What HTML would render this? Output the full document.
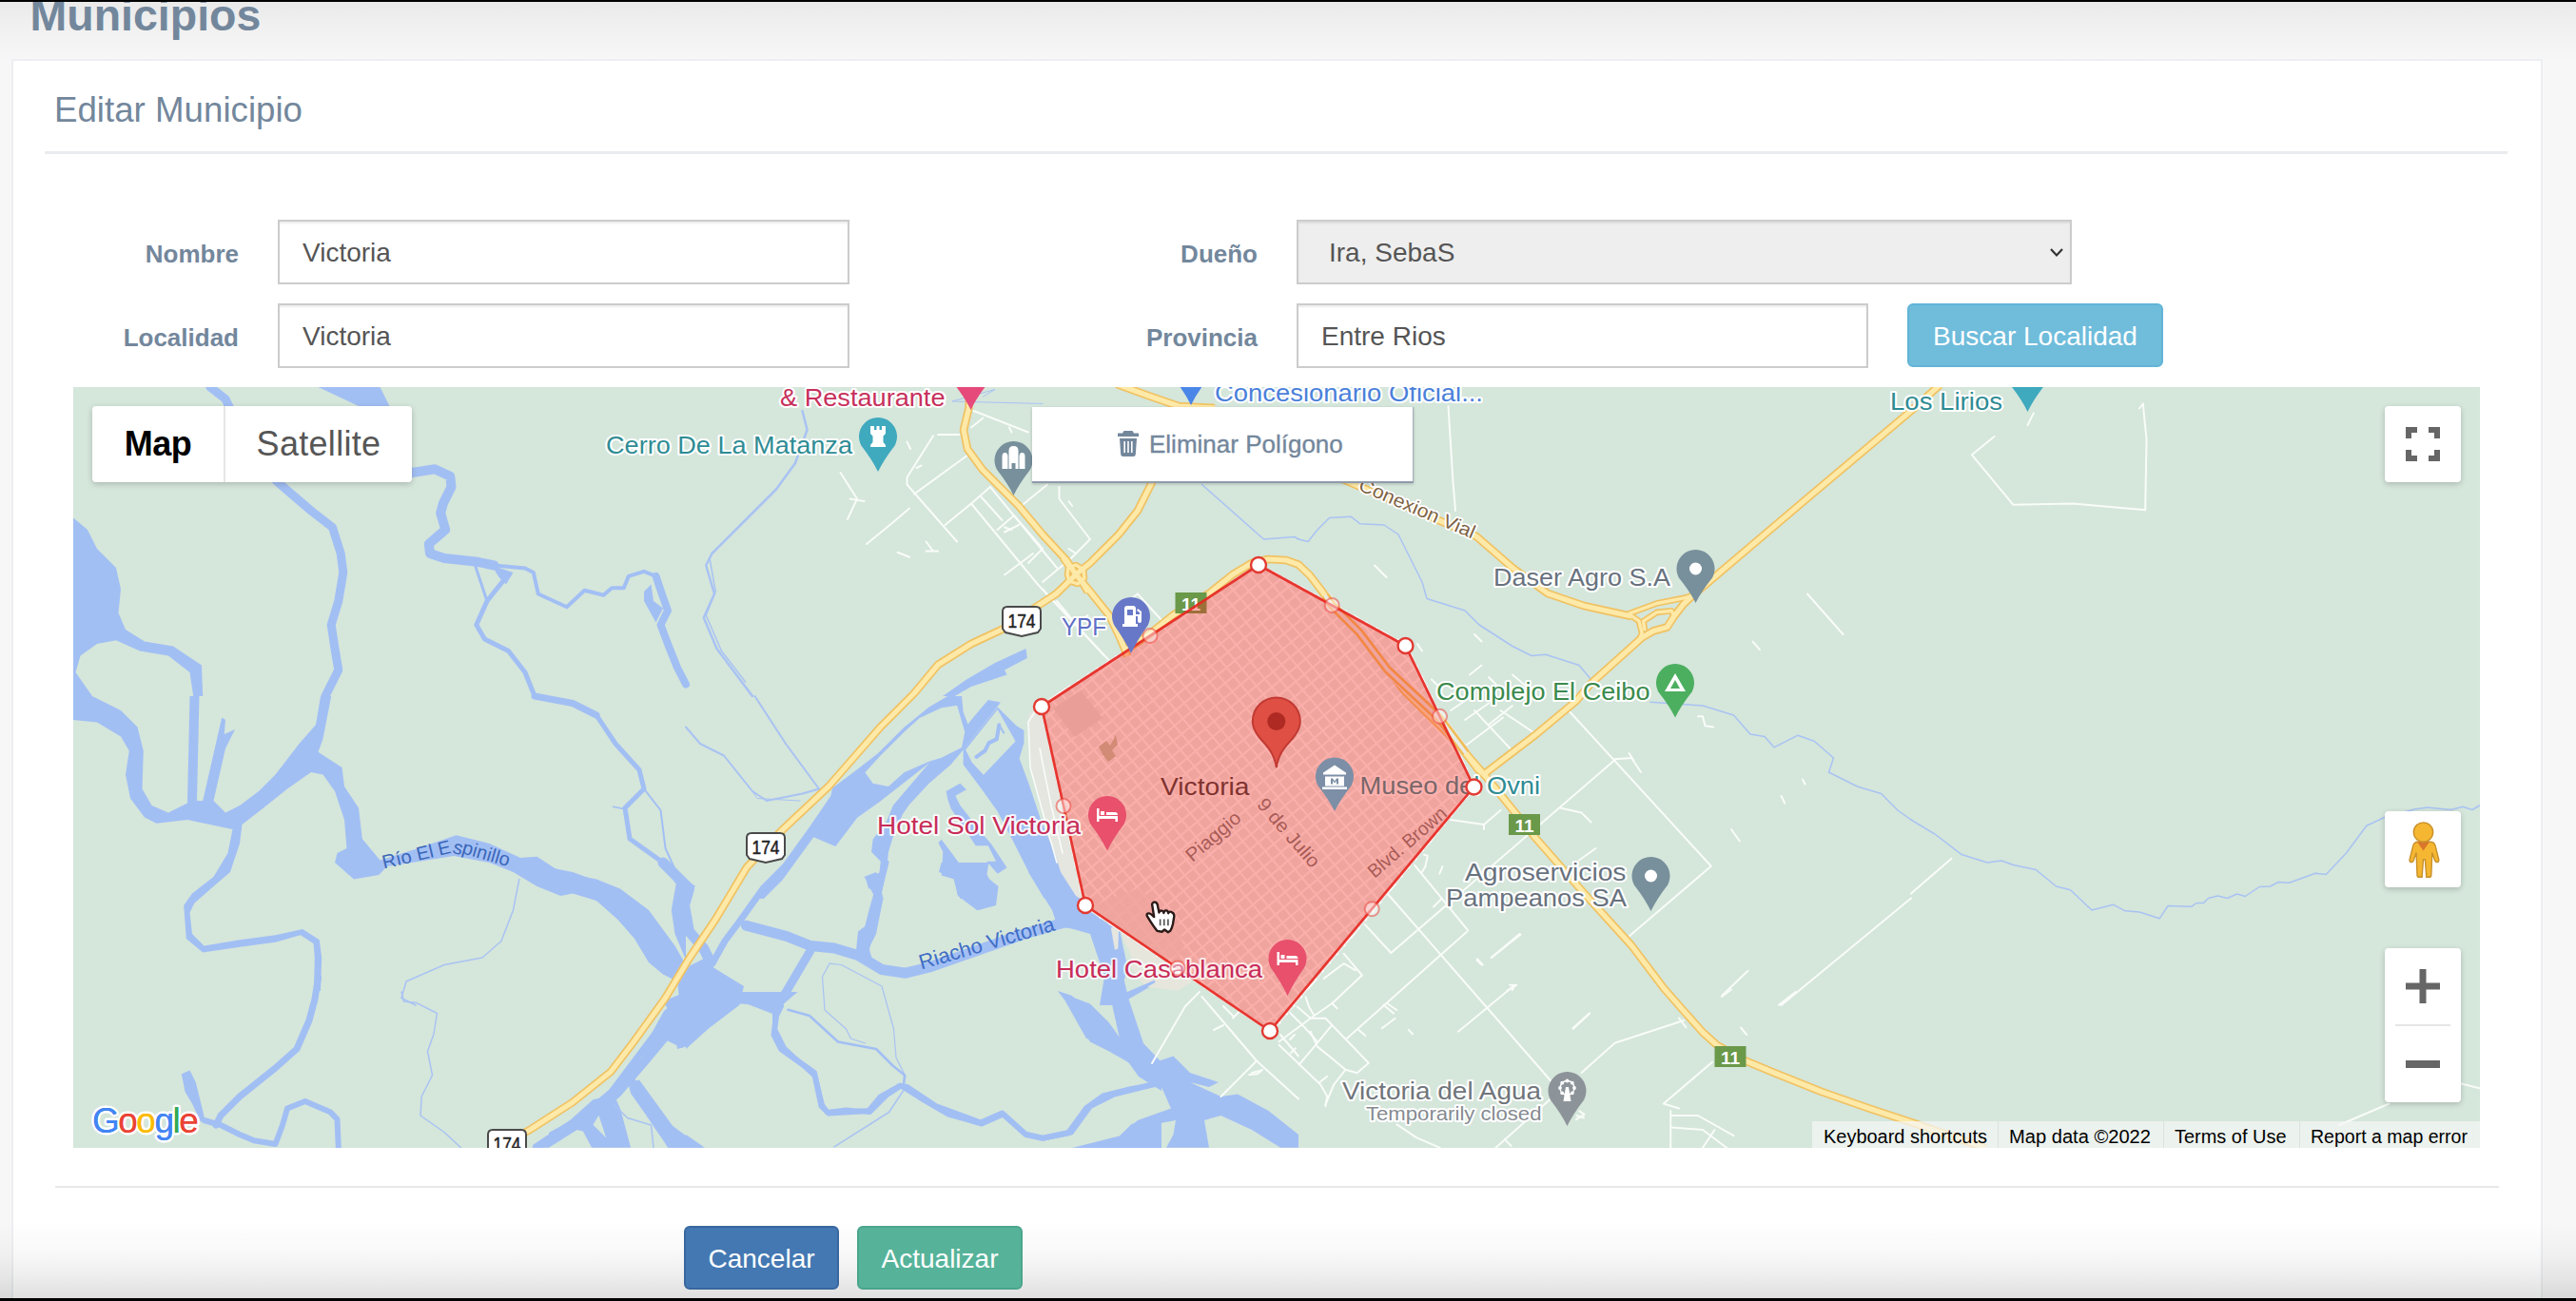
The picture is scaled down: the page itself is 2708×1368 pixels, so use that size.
<!DOCTYPE html>
<html><head><meta charset="utf-8"><title>Municipios</title>
<style>
*{box-sizing:border-box;margin:0;padding:0}
html,body{width:2708px;height:1368px;overflow:hidden}
body{background:#f7f7f7;font-family:"Liberation Sans",sans-serif;color:#73879c;position:relative}
.abs{position:absolute}
.topgrad{left:0;top:0;width:2708px;height:64px;background:linear-gradient(#e9e9e9,#f0f0f0 40%,#f7f7f7)}
.topbar{left:0;top:0;width:2708px;height:2px;background:#000}
.h3{left:31.5px;top:-14px;font-size:46.5px;font-weight:bold;line-height:60px;color:#73879c;white-space:nowrap}
.card{left:12px;top:62px;width:2661px;height:1400px;background:#fff;border:2px solid #eceef1}
.h2{left:57px;top:94px;font-size:36.7px;line-height:44px;color:#73879c;white-space:nowrap}
.hr1{left:47px;top:159px;width:2589px;height:3px;background:#e9ebee}
.lbl{font-size:26px;font-weight:bold;line-height:30px;color:#73879c;text-align:right;white-space:nowrap}
.inp{height:68px;border:2px solid #ccc;background:#fff;font-size:28px;line-height:66px;color:#555;padding-left:24px;white-space:nowrap;box-shadow:inset 0 2px 2px rgba(0,0,0,.075)}
.sel{background:#eee;padding-left:32px}
.btn{height:67px;border-radius:6px;color:#fff;font-size:28px;line-height:65px;text-align:center;white-space:nowrap}
.hr2{left:58px;top:1247px;width:2569px;height:2px;background:#e8e8e8}
.botgrad{left:0;top:1285px;width:2708px;height:83px;background:linear-gradient(rgba(0,0,0,0),rgba(0,0,0,.028) 40%,rgba(0,0,0,.068) 67%,rgba(0,0,0,.13))}
.botbar{left:0;top:1365px;width:2708px;height:3px;background:#000}
#map{left:77px;top:407px;width:2530px;height:800px;overflow:hidden;background:#d5e6db}
</style></head><body>
<div class="abs topgrad"></div>
<div class="abs h3">Municipios</div>
<div class="abs card"></div>
<div class="abs topbar"></div>
<div class="abs h2">Editar Municipio</div>
<div class="abs hr1"></div>

<div class="abs lbl" style="left:61px;width:190px;top:252px">Nombre</div>
<div class="abs inp" style="left:292px;top:231px;width:601px">Victoria</div>
<div class="abs lbl" style="left:61px;width:190px;top:340px">Localidad</div>
<div class="abs inp" style="left:292px;top:319px;width:601px">Victoria</div>

<div class="abs lbl" style="left:1132px;width:190px;top:252px">Due&ntilde;o</div>
<div class="abs inp sel" style="left:1363px;top:231px;width:815px">Ira, SebaS
<svg class="abs" style="right:6px;top:26px" width="16" height="14" viewBox="0 0 16 14"><path d="M2 3 L8 9.500 L14 3" fill="none" stroke="#333" stroke-width="2.200"/></svg></div>
<div class="abs lbl" style="left:1132px;width:190px;top:340px">Provincia</div>
<div class="abs inp" style="left:1363px;top:319px;width:601px">Entre Rios</div>
<div class="abs btn" style="left:2005px;top:319px;width:269px;background:#6fbcdb;border:2px solid #62b4d6">Buscar Localidad</div>

<div class="abs" id="map">
<svg class="abs" style="left:0;top:0" width="2530" height="800" viewBox="0 0 2530 800" font-family="Liberation Sans, sans-serif">
<defs><style>
.w{fill:#a2bff4;stroke:none}
.r{fill:none;stroke:#a2bff4;stroke-linejoin:round;stroke-linecap:round}
.s{fill:none;stroke:#a9c3f3;stroke-linejoin:round;stroke-linecap:round}
.g{fill:#d5e6db;stroke:none}
.mr{fill:none;stroke:#f9fcf9;stroke-linejoin:round;stroke-linecap:round}
.yc{fill:none;stroke:#f0c262;stroke-linejoin:round;stroke-linecap:butt}
.yf{fill:none;stroke:#fde9a8;stroke-linejoin:round;stroke-linecap:butt}
.halo{paint-order:stroke;stroke:#fff;stroke-width:5px;stroke-linejoin:round}
</style></defs>
<rect width="2530" height="800" fill="#d5e6db"/>
<polyline class="r" stroke-width="9" points="143.8,0 160,12.5 190,75 215,100 250,130 272.5,147.5 281.2,175 283.8,195 278.8,225 271.2,250 275,275 278.8,297.5 265,325"/>
<polygon class="w" points="257.5,0 322.5,0 332.5,20 356.2,82.5 356.2,96.2 345,96.2 300,20"/>
<polyline class="r" stroke-width="10" points="356.2,90 380,86.2 396.2,93.8 397.5,105 388.8,122.5 386.2,132.5 391.2,150 373.8,165 375,175 390,180 425,183.8 442.5,187.5"/>
<polyline class="r" stroke-width="4" points="442.5,187.5 475,190.5 483.8,195 488.8,217.5 518.8,231.2 537.5,213.8 557.5,218.8 566.2,211.2 578.8,211.2 583.8,198.8 600,193.8 612.5,198.8"/>
<polyline class="r" stroke-width="8" points="612.5,198.8 618.8,217.5 625,235 617.5,250 625,270 635,295 644,312.5"/>
<polygon class="w" points="600,215 607.5,207.5 610,225 620,232.5 612.5,247.5 600,225"/>
<polyline class="r" stroke-width="3" points="422.5,187.5 435,225"/>
<polygon class="w" points="440,187.5 462.5,195 455,207.5 447.5,200"/>
<polyline class="r" stroke-width="5" points="455,200 435,225 423.8,250 432.5,265 457.5,277.5 475,300 485,325"/>
<polygon class="w" points="0,137.5 15,150 25,170 45,190 50,212.5 47.5,237.5 55,255 75,267.5 105,272.5 135,292.5 136.2,325 126.2,325 122.5,300 100,282.5 70,277.5 45,266.2 25,270 7.5,282.5 2.5,300 20,325 0,325"/>
<polygon class="w" points="0,325 20,325 50,340 67.5,357.5 73.8,382.5 72.5,422.5 82.5,440 100,447.5 120,437.5 122.5,325 132.5,325 130,435 136.2,435 156.2,347.5 160,350 158.8,365 170,360 160,380 147.5,435 160,447.5 175,440 195,425 212.5,407.5 237.5,375 255,355 260,325 271.2,325 262.5,370 257.5,383.8 282.5,400 285,420 300,442.5 303.8,475 322.5,497.5 362.5,485 402.5,471.2 437.5,480 470,495 487.5,493.8 512.5,510 550,517.5 575,527.5 605,550 632.5,587.5 644,607.5 644,627.5 625,612.5 600,587.5 575,557.5 550,540 525,532.5 512.5,535 487.5,525 462.5,510 437.5,500 400,493 362.5,499 330,504 321.2,513 295,517.5 275,500 277.5,490 287.5,485 285,455 275,425 262.5,407.5 250,405 225,422.5 200,442.5 177.5,460 175,480 165,510 147.5,525 127.5,542.5 122.5,552.5 125,575 137.5,587.5 175,581.2 212.5,576.2 241.2,570 258.8,581.2 261.2,600 260,635 253,635 253.8,600 252.5,585 238.8,576.2 212.5,583.8 175,588.8 136.2,594.5 118.8,580 116.2,545 125,532.5 147.5,515 162.5,490 167.5,465 120,455 87.5,458.8 75,452.5 60,432.5 55,407.5 58.8,382.5 50,367.5 25,352.5 0,350"/>
<polyline class="r" stroke-width="7" points="485,325 525,332.5 550,345"/>
<polyline class="r" stroke-width="5" points="550,345 570,375 595,402.5 600,422.5 580,442.5 585,475 620,500 635,520"/>
<polyline class="r" stroke-width="2" points="600,422.5 617.5,445 622.5,485 635,512.5"/>
<polyline class="r" stroke-width="1.5" points="567.5,441.2 580,443.8"/>
<polygon class="w" points="635,515 644,522.5 644,602.5 632.5,575 628.8,550"/>
<polyline class="s" stroke-width="1.5" points="468.8,517.5 462.5,550 450,582.5 430,600 390,607.5 350,625 345,642.5 360,650"/>
<polyline class="s" stroke-width="2.5" points="766.5,25 771.5,45 759,80 739,107.5 706.5,140 671.5,175 665.2,187.5 674,217.5 662.8,242.5 676.5,275 714,325"/>
<polyline class="s" stroke-width="1.5" points="669,180 675.2,215 665.2,240 681.5,277.5 706.5,310"/>
<polygon class="w" points="1001.5,275 1002.8,285 979,297.5 981.5,302.5 944,315 926.5,325 914,325 939,307.5 969,290"/>
<polyline class="s" stroke-width="1" points="956.5,10 969,2.5 924,15 1019,17.5"/>
<polyline class="s" stroke-width="1.5" points="1288,160 1298,162.5 1308,150 1320.5,137.5 1343,136.2 1353,143.8 1378,145 1393,155 1405.5,180 1418,205 1423,222.5 1463,235 1478,250 1513,272.5 1533,282.5 1548,281.2 1583,292.5 1595.5,307.5"/>
<polyline class="s" stroke-width="1.5" points="1186.5,102.5 1251.5,160 1284,157.5 1288,160"/>
<polyline class="s" stroke-width="1.5" points="1658,331.2 1713,335 1745.5,345 1763,365 1778,367.5 1788,378.8 1813,366.2 1830.5,372.5 1850.5,390 1845.5,405 1875.5,420 1900.5,427.5 1918,445 1932,455"/>
<polyline class="s" stroke-width="1.5" points="1932,455 1957,470 1984.5,491.2 2012,500 2027,498 2039.5,502.5 2063.2,507.5 2084.5,525 2099.5,528.8 2122,550 2144.5,544.2 2157,550.8 2172,552 2193.2,558.8 2202,545.5 2227,546.2 2232,542.5 2239.5,542.5 2244.5,537.5 2254.5,535 2264.5,537.5 2274.5,533 2283.2,535.5 2298.2,525.5 2309.5,525 2318.2,520.5 2329.5,521.2 2357,511.2 2368.2,512.5 2389.5,490 2410.8,461.2 2429.5,452.5 2462,443.8 2474.5,442 2499.5,444.5 2512,441.2 2522,444.5 2529.5,440"/>
<polyline class="r" stroke-width="7" points="257.5,621 254,643.5 248,666 235,696 212.5,716 175,746 155,766 150,776"/>
<polygon class="w" points="113.8,722.2 122.5,718.5 128.8,731 136.2,761 138.8,772.2 133.8,772.2 125,753.5 117.5,741"/>
<polyline class="r" stroke-width="6" points="137.5,771 155,776 175,786 190,792.2 212.5,796 220,776 225,758.5 243.8,751 270,762.2 277.5,769.8 278.8,799.8"/>
<polyline class="s" stroke-width="1.5" points="345,636 347.5,646 360,647.2 382.5,658.5 378.8,681 372.5,698.5 377.5,723.5 366.2,746 365,766 390,783.5 407.5,799.8"/>
<polygon class="w" points="919.2,325 899.6,336.5 873.4,357.8 845.5,385.6 824.2,402 798,421.7 796.4,429.8 775.1,461 745.6,501.9 716.1,538 725.9,538 745.6,518.3 778.3,473.3 801.3,483.1 824.2,452.8 847.1,436.4 899.6,395.4 922.5,390.5 935.6,381.5 950.4,362.7 970,338.1 974.9,331.6 961.8,329.1 947.1,346.3 940.5,354.5 935.6,341.4 934,325"/>
<polygon class="g" points="912.7,337.3 929.1,334.8 937.3,362.7 934,379.1 912.7,389.7 899.6,393.8 873.4,405.3 857,420 840.6,416.7 832.4,405.3 848.8,387.3 873.4,362.7 889.7,347.9"/>
<polygon class="w" points="899.6,395.4 881.5,416.7 861.9,439.7 855.3,456.1 840.6,475.7 839,488.8 848.8,498.7 847.1,513.4 832.4,515 837.3,526.5 843.9,538 848.8,538 852.1,521.6 855.3,505.2 857,488.8 861.9,472.4 871.7,449.5 878.3,439.7 899.6,416.7 922.5,397.1 935.6,381.5"/>
<polygon class="w" points="935.6,381.5 971.7,336.5 991.3,356.1 999.5,361 999.5,374.1 994.6,390.5 1004.4,416.7 1017.5,456.1 1030.6,488.8 1043.7,511.8 1060.1,531.4 1066,538 1020.8,538 1004.4,510.1 988,477.4 971.7,446.2 955.3,423.3 935.6,397.1"/>
<polygon class="g" points="938.1,381.5 971.7,338.9 990.5,372.5 956.9,407.7 944.6,394.6"/>
<polyline class="r" stroke-width="4" points="973.3,355.3 970.8,370.1 962.6,374.1 958.5,382.3 949.5,388.9"/>
<polyline class="r" stroke-width="2" points="973.3,355.3 978.2,363.5"/>
<polygon class="w" points="917.6,424.9 932.3,416.7 938.9,423.3 927.4,429.8 932.3,439.7 955.3,469.2 965.1,480.6 981.5,505.2 971.7,511.8 960.2,498.7 970,498.7 961.8,482.3 948.7,482.3 942.2,472.4 922.5,443 919.2,433.1"/>
<polygon class="w" points="912.7,475.7 922.5,488.8 932.3,501.9 948.7,506.8 955.3,503.6 963.5,518.3 971.7,524.9 970,538 932.3,538 929.1,518.3 912.7,513.4 914.3,488.8 909.4,479"/>
<polygon class="w" points="929,532.5 951.5,550 969,545 971.5,525 964,520 954,500 931.5,510"/>
<polygon class="w" points="1004,510 1019,460 1034,495 1049,522.5 1069,540 1084,560 1099,565 1104,590 1109,612.5 1094,650 1079,650 1084,620 1069,575 1034,565 1029,550"/>
<polygon class="w" points="841.5,532.5 851.5,537.5 844,575 836.5,590 841.5,607.5 829,602.5 829,580 836.5,550"/>
<polygon class="w" points="831.5,515 844,510 851.5,537.5 841.5,532.5 836.5,522.5"/>
<polygon class="w" points="500,505 525,510 552.5,520 575,537.5 595,557.5 607.5,580 622.5,600 640,612.5 635,625 620,617.5 605,605 590,580 572.5,560 550,540 525,530 500,527.5"/>
<polygon class="w" points="640,612.5 665,600 672.5,610 705,630 700,650 640,695 620,685 610,690 590,715 565,750 532.5,772.5 500,790 500,784 528.5,768.5 563.5,738.5 586,708.5 608.5,678.5 621,656 637,642.5 635,625"/>
<polyline class="r" stroke-width="11" points="620,500 647.5,527.5 642.5,545 647.5,572.5 662.5,590 670,605"/>
<polyline class="r" stroke-width="7" points="752.5,500 725,527.5 700,562.5 685,582.5 672.5,605"/>
<polyline class="r" stroke-width="11" points="707.5,566.2 750,577.5 775,587.5 800,590 825,597.5 850,612.5 875,616.2 900,610 950,592.5 1000,575 1035,565 1062.5,557.5"/>
<polyline class="r" stroke-width="9" points="775,592.5 750,635 737.5,655 705,642.5"/>
<polyline class="r" stroke-width="5" points="855,500 847.5,530 840,565 832.5,600"/>
<polygon class="w" points="832.5,515 850,510 850,527.5 836.2,527.5"/>
<polygon class="w" points="825,572.5 835,565 837.5,600 822.5,597.5"/>
<polyline class="r" stroke-width="5" points="737.5,655 737.5,675 747.5,695 780,725 787.5,755 792.5,762.5 812.5,760 837.5,762.5 855,745 870,735 890,747.5 920,765 955,775 977.5,765 1000,785 1020,790 1045,785 1065,757.5 1082.5,745 1112.5,737.5 1144,732.5"/>
<polyline class="s" stroke-width="1.2" points="795,606.2 787.5,620 790,655 812.5,675 817.5,685 832.5,690"/>
<polyline class="s" stroke-width="1.2" points="795,606.2 807.5,607.5 850,630 862.5,675 865,705 875,725 872.5,735"/>
<polyline class="s" stroke-width="1.5" points="872.5,740 857.5,762.5 800,798.8"/>
<polygon class="w" points="912.5,500 962.5,500 960,515 972.5,525 970,545 950,550 930,535 925,515 910,510"/>
<polygon class="w" points="1000,500 1030,500 1050,520 1060,537.5 1070,557.5 1085,565 1100,582.5 1105,625 1110,645 1125,690 1144,710 1144,740 1120,725 1095,690 1065,685 1042.5,645 1035,635 1050,640 1070,660 1090,675 1100,685 1090,640 1085,582.5 1075,572.5 1035,567.5 1030,550 1015,520"/>
<polyline class="r" stroke-width="2" points="1105,645 1140,625"/>
<polygon class="w" points="529.3,781.1 561,754.6 570.2,748 575.5,759.9 586.1,799.8 545.1,799.8 535.9,782.4"/>
<polygon class="g" points="546.5,775.8 552.4,765.8 560.3,789.6"/>
<polygon class="w" points="583.5,732.1 590.1,726.9 594,733.5 609.9,759.9 628.4,775.8 661.5,799.8 625.8,799.8 615.2,785 602,765.2 586.1,742.7"/>
<polygon class="w" points="483,796.9 522.7,770.5 546.5,749.3 557,746.7 529.3,781.1 493.6,799.8 483,799.8"/>
<polygon class="w" points="1050,800 1100,787.5 1112.5,775 1144,765 1144,800"/>
<polygon class="w" points="1036.5,636 1049,641 1069,648.5 1089,668.5 1101.5,686 1119,698.5 1134,711 1126.5,721 1106.5,708.5 1089,698.5 1069,688.5 1059,673.5 1049,651"/>
<polygon class="w" points="1091.5,636 1104,636 1114,661 1121.5,691 1134,711 1156.5,703.5 1174,721 1204,731 1194,736 1174,731 1206.5,746 1224,743.5 1256.5,761 1288,786 1288,799.8 1269,799.8 1239,781 1206.5,766 1189,771 1194,799.8 1149,799.8 1156.5,786 1159,771 1131.5,776 1111.5,783.5 1106.5,799.8 1099,799.8 1101.5,786 1119,771 1154,758.5 1144,736 1126.5,721 1109,693.5 1099,661"/>
<polyline class="r" stroke-width="6" points="1134,733.5 1094,743.5 1069,756 1049,783.5 1019,789.8 1001.5,786 976.5,763.5 954,773.5 906.5,756 876.5,736 869,734.8"/>
<polygon class="w" points="1054,799.8 1106.5,786 1106.5,799.8"/>
<polygon class="w" points="644,636 761.5,636 744,651 701.5,648.5 669,673.5 644,696"/>
<polygon class="w" points="644,786 664,799.8 644,799.8"/>
<polyline class="r" stroke-width="6" points="744,651 739,661 736.5,681 744,696 779,721 786.5,756 794,763.5 836.5,761 849,746 869,734.8"/>
<polyline class="r" stroke-width="2.5" points="751.5,654.8 774,661 804,688.5 844,696 861.5,713.5 874,723.5 872.8,734.8"/>
<polygon class="w" points="620,646 644,636 644,693.5 635,696 630,661"/>
<polygon class="w" points="628.5,654.5 621,672 598.5,704.5 566,739.5 528.5,769.5 491,794.5 482.5,799.8 500,799.8 537.5,776 575,746 605,711 630,681 644,676"/>
<polygon class="w" points="585,731 595,728.5 644,796 644,799.8 625,799.8"/>
<polyline class="s" stroke-width="1.5" points="567.5,753.5 582.5,768.5 607.5,776 610,799.8"/>
<polyline class="s" stroke-width="2" points="716.5,325 749,375 784,422.5"/>
<polyline class="s" stroke-width="2" points="644,357.5 659,375 684,387.5 714,425 729,435 766.5,427.5 784,422.5"/>
<polyline class="s" stroke-width="1" points="714,425 719,432.5 764,435"/>
<polygon class="w" points="644,517.5 654,525 644,537.5"/>
<polygon fill="#e4e6df" points="1018,330 1004,345 1006,400 1020,450 1038,510 1054,535 1062,540 1064,545"/>
<polygon fill="#e6e6dd" points="1081,558.6 1175,623.7 1175,626.4 1161,634.7 1127,630.6 1113,612.6 1111.5,596 1106,585 1100.5,571"/>
<polygon fill="#e4e6df" points="1090.8,568.3 1099.1,568.3 1098.4,590.5 1094.9,591.8"/>
<polygon class="w" points="1104.6,637.5 1136.4,623.7 1137.8,625.7 1106,644.4"/>
<polyline class="mr" stroke-width="2" points="909,50 931.5,50"/>
<polyline class="mr" stroke-width="2" points="904,51.2 876.5,95 876.5,102.5 929,162.5"/>
<polyline class="mr" stroke-width="2" points="884,112.5 939,72.5"/>
<polyline class="mr" stroke-width="2" points="916.5,145 944,122.5 964,105"/>
<polyline class="mr" stroke-width="2" points="944,122.5 1014,207.5 1084,282.5"/>
<polyline class="mr" stroke-width="2" points="971.5,150 989,135 1019,170 1004,185"/>
<polyline class="mr" stroke-width="2" points="979,152.5 994,145"/>
<polyline class="mr" stroke-width="2" points="979,197.5 1009,175"/>
<polyline class="mr" stroke-width="2" points="1019,205 1049,180"/>
<polyline class="mr" stroke-width="2" points="996.5,125 1024,102.5"/>
<polyline class="mr" stroke-width="2" points="1036.5,105 1036.5,117.5 1069,160 1049,180"/>
<polyline class="mr" stroke-width="2" points="834,165 861.5,142.5 879,127.5"/>
<polyline class="mr" stroke-width="2" points="806.5,90 824,117.5 814,138.8"/>
<polyline class="mr" stroke-width="2" points="816.5,117.5 831.5,120"/>
<polyline class="mr" stroke-width="2" points="896.5,162.5 904,172.5"/>
<polyline class="mr" stroke-width="2" points="896.5,172.5 909,172.5"/>
<polyline class="mr" stroke-width="2" points="866.5,173.8 879,178.8"/>
<polyline class="mr" stroke-width="2" points="946.5,25 1004,47.5"/>
<polyline class="mr" stroke-width="2" points="956.5,32.5 944,42.5"/>
<polyline class="mr" stroke-width="2" points="984,42.5 986.5,47.5"/>
<polyline class="mr" stroke-width="2" points="964,105 1034,190"/>
<polyline class="mr" stroke-width="2" points="954,115 976.5,140"/>
<polyline class="mr" stroke-width="2" points="1119,217.5 1144,245"/>
<polyline class="mr" stroke-width="2" points="1019,212.5 1089,287.5"/>
<polyline class="mr" stroke-width="2" points="1034,225 1059,255"/>
<polyline class="mr" stroke-width="2" points="1049,252.5 1066.5,240"/>
<polyline class="mr" stroke-width="2" points="1119,217.5 1109,225"/>
<polyline class="mr" stroke-width="2" points="876.5,57.5 880.2,65"/>
<polyline class="mr" stroke-width="2" points="1046.5,120 1050.2,125"/>
<polyline class="mr" stroke-width="2" points="1046.5,170 1054,175"/>
<polyline class="mr" stroke-width="2" points="886.5,85 891.5,82.5"/>
<polyline class="mr" stroke-width="2" points="979,147.5 986.5,150"/>
<polyline class="mr" stroke-width="2" points="1445.5,20 1450.5,100 1453,130"/>
<polyline class="mr" stroke-width="2" points="1368,187.5 1380.5,200"/>
<polyline class="mr" stroke-width="2" points="1473,260 1480.5,267.5"/>
<polyline class="mr" stroke-width="2" points="1413,270 1418,277.5"/>
<polyline class="mr" stroke-width="2" points="1480.5,292.5 1468,302.5"/>
<polyline class="mr" stroke-width="2" points="1823,217.5 1860.5,260"/>
<polyline class="mr" stroke-width="2" points="1765.5,267.5 1773,276.2"/>
<polyline class="mr" stroke-width="2" points="1428,307.5 1438,317.5"/>
<polyline class="mr" stroke-width="2" points="1488,305 1498,315"/>
<polyline class="mr" stroke-width="2" points="1513,302.5 1528,315"/>
<polyline class="mr" stroke-width="2" points="2019.5,52 1995.8,71.2 2039.5,123.8 2102,122.5 2178.2,129.2 2179.5,55 2175.8,17.5"/>
<polyline class="mr" stroke-width="2" points="2054.5,40 2060.8,27.5"/>
<polyline class="mr" stroke-width="2" points="2172,22.5 2175.8,17.5"/>
<polyline class="mr" stroke-width="2" points="1573,341.2 1721.8,503.8 1635.5,577.5"/>
<polyline class="mr" stroke-width="2" points="1620.5,391.2 1638,390 1648,405"/>
<polyline class="mr" stroke-width="2" points="1635.5,385 1640.5,392.5"/>
<polyline class="mr" stroke-width="2" points="1563,442.5 1585.5,447.5 1595.5,457.5"/>
<polyline class="mr" stroke-width="2" points="1448,455 1483,460 1500.5,445"/>
<polyline class="mr" stroke-width="2" points="1483,460 1483,465"/>
<polyline class="mr" stroke-width="2" points="1600.5,485 1583,497.5"/>
<polyline class="mr" stroke-width="2" points="1520.5,575 1490.5,600"/>
<polyline class="mr" stroke-width="2" points="1760.5,613.8 1733,640"/>
<polyline class="mr" stroke-width="2" points="1932,537.5 1795.5,650"/>
<polyline class="mr" stroke-width="2" points="1743,465 1751.8,477.5"/>
<polyline class="mr" stroke-width="2" points="1795.5,430 1799.2,437.5"/>
<polyline class="mr" stroke-width="2" points="1818,412.5 1820.5,417.5"/>
<polyline class="mr" stroke-width="2" points="1463,377.5 1503,347.5"/>
<polyline class="mr" stroke-width="2" points="1473,340 1510.5,380"/>
<polyline class="mr" stroke-width="2" points="1448,340 1463,330"/>
<polyline class="mr" stroke-width="2" points="1500.5,340 1538,365"/>
<polyline class="mr" stroke-width="2" points="1463,350 1488,332.5"/>
<polyline class="mr" stroke-width="2" points="1488,355 1513,335"/>
<polyline class="mr" stroke-width="2" points="1475.5,602.5 1480.5,607.5"/>
<polyline class="mr" stroke-width="2" points="1708,346.2 1713,346.2 1715.5,356.2 1724.2,357.5"/>
<polyline class="mr" stroke-width="2" points="1410.2,502.9 1466.2,571.4"/>
<polyline class="mr" stroke-width="2" points="1382.8,534 1569,747.5 1576,756"/>
<polyline class="mr" stroke-width="2" points="1357.9,565.2 1385.3,595"/>
<polyline class="mr" stroke-width="2" points="1621,391.7 1385.3,595"/>
<polyline class="mr" stroke-width="2" points="1420,491.7 1423.9,492.9 1421.4,504 1417.6,510.4"/>
<polyline class="mr" stroke-width="2" points="1436.3,511.6 1439.4,504"/>
<polyline class="mr" stroke-width="2" points="1430,546.5 1438.8,537.8"/>
<polyline class="mr" stroke-width="2" points="1476.2,601.3 1481.8,607.5"/>
<polyline class="mr" stroke-width="2" points="1507.3,634.9 1517.3,628.7"/>
<polyline class="mr" stroke-width="2" points="1585.5,721 1620.5,689.8 1693,666"/>
<polyline class="mr" stroke-width="2" points="1576.8,674.8 1594.2,658.5"/>
<polyline class="mr" stroke-width="2" points="1723,709.8 1671.8,753.5 1688,758.5"/>
<polyline class="mr" stroke-width="2" points="1679.2,761 1679.2,799.8"/>
<polyline class="mr" stroke-width="2" points="1680.5,766 1708,766 1745.5,787.2"/>
<polyline class="mr" stroke-width="2" points="1680.5,778.5 1713,781 1738,799.8"/>
<polyline class="mr" stroke-width="2" points="1725.5,781 1713,799.8"/>
<polyline class="mr" stroke-width="2" points="1495.5,799.8 1553,748.5"/>
<polyline class="mr" stroke-width="2" points="1688,663.5 1695.5,673.5"/>
<polyline class="mr" stroke-width="2" points="1753,673.5 1759.2,681"/>
<polyline class="mr" stroke-width="2" points="1733,641 1743,633.5"/>
<polyline class="mr" stroke-width="2" points="1793,649.8 1810.5,636"/>
<polyline class="mr" stroke-width="2" points="1580.5,766 1588,768.5"/>
<polyline class="mr" stroke-width="2" points="1184,636 1169,651 1134,711"/>
<polyline class="mr" stroke-width="2" points="1186.5,641 1244,708.5 1288,748.5"/>
<polyline class="mr" stroke-width="2" points="1244,708.5 1206.5,746"/>
<polyline class="mr" stroke-width="2" points="1199,676 1209,671"/>
<polyline class="mr" stroke-width="2" points="1209,651 1219,661"/>
<polyline class="mr" stroke-width="2" points="1226.5,656 1219,663.5"/>
<polyline class="mr" stroke-width="2" points="1239,721 1249,718.5"/>
<polyline class="mr" stroke-width="2" points="1269,681 1288,703.5"/>
<polyline class="mr" stroke-width="2" points="1279,686 1284,681"/>
<polyline class="mr" stroke-width="2" points="1974.5,495.8 1932,532.5"/>
<polyline class="mr" stroke-width="2" points="2529.5,737.2 2509.5,732.2"/>
<polyline class="mr" stroke-width="2" points="2434.5,753.5 2382,776"/>
<polyline class="mr" stroke-width="2" points="1267.6,688.2 1300.7,663.7 1323.4,648 1354.8,618.4 1335.6,595.7"/>
<polyline class="mr" stroke-width="2" points="1339.1,684.7 1464.7,573"/>
<polyline class="mr" stroke-width="2" points="1456,677.7 1515.3,628.8"/>
<polyline class="mr" stroke-width="2" points="1510.1,628.8 1515.3,628.8 1512.7,634.1"/>
<polyline class="mr" stroke-width="2" points="1490.9,600 1521.4,575.6"/>
<polyline class="mr" stroke-width="2" points="1576.4,674.2 1593.9,658.5"/>
<polyline class="mr" stroke-width="2" points="1278,656.8 1293.7,672.5 1307.7,688.2"/>
<polyline class="mr" stroke-width="2" points="1286.8,651.5 1300.7,663.7 1316.4,663.7 1361.8,710.8 1349.6,721.3 1337.4,717.8"/>
<polyline class="mr" stroke-width="2" points="1300.7,677.7 1307.7,693.4 1325.1,707.4 1337.4,717.8 1325.1,733.5 1316.4,754.5"/>
<polyline class="mr" stroke-width="2" points="1267.6,691.7 1311.2,733.5 1318.2,745.7 1316.4,756.2"/>
<polyline class="mr" stroke-width="2" points="1279.8,700.4 1285,695.1"/>
<polyline class="mr" stroke-width="2" points="1288.5,712.6 1307.7,689.9 1323.4,670.7"/>
<polyline class="mr" stroke-width="2" points="1309.4,731.8 1318.2,724.8"/>
<polyline class="mr" stroke-width="2" points="1236.2,723.1 1244.9,722.2 1250.1,717.8"/>
<polyline class="mr" stroke-width="2" points="1375.7,674.2 1389.7,663.7"/>
<polyline class="mr" stroke-width="2" points="1403.7,675.9 1408,680.3"/>
<polyline class="mr" stroke-width="2" points="1377.5,649.8 1388,658.5"/>
<polyline class="mr" stroke-width="2" points="1381,648 1391.4,655"/>
<polyline class="mr" stroke-width="2" points="1351.3,675.9 1358.3,682.1"/>
<polyline class="mr" stroke-width="2" points="1295.5,641.1 1299,651.5 1304.2,660.2"/>
<polyline class="mr" stroke-width="2" points="1314.7,621.9 1335.6,606.2 1347.8,613.1"/>
<polyline class="mr" stroke-width="2" points="1323.4,648 1328.6,653.3"/>
<polyline class="mr" stroke-width="2" points="1391.4,775.4 1412.4,789.4 1436.8,799.8"/>
<polyline class="mr" stroke-width="2" points="1504.9,791.1 1511.8,798.1"/>
<polyline class="mr" stroke-width="2" points="1579.9,770.2 1588.6,764.9 1583.4,761.4"/>
<polyline class="mr" stroke-width="1.6" points="1012,340 1004,352 1006,400 1020,450 1034,500"/>
<polyline class="mr" stroke-width="1.6" points="1016,380 1028,440 1040,490"/>
<clipPath id="cityclip"><polygon points="1016,334 1132,259 1246,185 1324,227 1402,270 1438,344 1475,420.5 1368,551 1260,680 1160,613 1062,547"/></clipPath>
<g clip-path="url(#cityclip)"><polygon points="1016,334 1132,259 1246,185 1324,227 1402,270 1438,344 1475,420.5 1368,551 1260,680 1160,613 1062,547" fill="#e9ebe6"/>
<g stroke="#fbfcfa" stroke-width="2.2"><line x1="689.7" y1="415.6" x2="1333.1" y2="-124.3"/><line x1="697.1" y1="424.5" x2="1340.6" y2="-115.4"/><line x1="704.6" y1="433.4" x2="1348.0" y2="-106.6"/><line x1="712.0" y1="442.3" x2="1355.5" y2="-97.7"/><line x1="719.5" y1="451.2" x2="1363.0" y2="-88.8"/><line x1="726.9" y1="460.0" x2="1370.4" y2="-79.9"/><line x1="734.4" y1="468.9" x2="1377.9" y2="-71.0"/><line x1="741.9" y1="477.8" x2="1385.3" y2="-62.1"/><line x1="749.3" y1="486.7" x2="1392.8" y2="-53.2"/><line x1="756.8" y1="495.6" x2="1400.2" y2="-44.4"/><line x1="764.2" y1="504.5" x2="1407.7" y2="-35.5"/><line x1="771.7" y1="513.4" x2="1415.2" y2="-26.6"/><line x1="779.1" y1="522.2" x2="1422.6" y2="-17.7"/><line x1="786.6" y1="531.1" x2="1430.1" y2="-8.8"/><line x1="794.0" y1="540.0" x2="1437.5" y2="0.1"/><line x1="801.5" y1="548.9" x2="1445.0" y2="9.0"/><line x1="809.0" y1="557.8" x2="1452.4" y2="17.9"/><line x1="816.4" y1="566.7" x2="1459.9" y2="26.7"/><line x1="823.9" y1="575.6" x2="1467.3" y2="35.6"/><line x1="831.3" y1="584.5" x2="1474.8" y2="44.5"/><line x1="838.8" y1="593.3" x2="1482.3" y2="53.4"/><line x1="846.2" y1="602.2" x2="1489.7" y2="62.3"/><line x1="853.7" y1="611.1" x2="1497.2" y2="71.2"/><line x1="861.2" y1="620.0" x2="1504.6" y2="80.1"/><line x1="868.6" y1="628.9" x2="1512.1" y2="88.9"/><line x1="876.1" y1="637.8" x2="1519.5" y2="97.8"/><line x1="883.5" y1="646.7" x2="1527.0" y2="106.7"/><line x1="891.0" y1="655.5" x2="1534.5" y2="115.6"/><line x1="898.4" y1="664.4" x2="1541.9" y2="124.5"/><line x1="905.9" y1="673.3" x2="1549.4" y2="133.4"/><line x1="913.3" y1="682.2" x2="1556.8" y2="142.3"/><line x1="920.8" y1="691.1" x2="1564.3" y2="151.1"/><line x1="928.3" y1="700.0" x2="1571.7" y2="160.0"/><line x1="935.7" y1="708.9" x2="1579.2" y2="168.9"/><line x1="943.2" y1="717.7" x2="1586.7" y2="177.8"/><line x1="950.6" y1="726.6" x2="1594.1" y2="186.7"/><line x1="958.1" y1="735.5" x2="1601.6" y2="195.6"/><line x1="965.5" y1="744.4" x2="1609.0" y2="204.5"/><line x1="973.0" y1="753.3" x2="1616.5" y2="213.3"/><line x1="980.5" y1="762.2" x2="1623.9" y2="222.2"/><line x1="987.9" y1="771.1" x2="1631.4" y2="231.1"/><line x1="995.4" y1="779.9" x2="1638.8" y2="240.0"/><line x1="1002.8" y1="788.8" x2="1646.3" y2="248.9"/><line x1="1010.3" y1="797.7" x2="1653.8" y2="257.8"/><line x1="1017.7" y1="806.6" x2="1661.2" y2="266.7"/><line x1="1025.2" y1="815.5" x2="1668.7" y2="275.5"/><line x1="1032.7" y1="824.4" x2="1676.1" y2="284.4"/><line x1="1040.1" y1="833.3" x2="1683.6" y2="293.3"/><line x1="1047.6" y1="842.1" x2="1691.0" y2="302.2"/><line x1="1055.0" y1="851.0" x2="1698.5" y2="311.1"/><line x1="1062.5" y1="859.9" x2="1706.0" y2="320.0"/><line x1="1069.9" y1="868.8" x2="1713.4" y2="328.9"/><line x1="1077.4" y1="877.7" x2="1720.9" y2="337.8"/><line x1="1084.8" y1="886.6" x2="1728.3" y2="346.6"/><line x1="1092.3" y1="895.5" x2="1735.8" y2="355.5"/><line x1="1099.8" y1="904.4" x2="1743.2" y2="364.4"/><line x1="1107.2" y1="913.2" x2="1750.7" y2="373.3"/><line x1="1114.7" y1="922.1" x2="1758.1" y2="382.2"/><line x1="1122.1" y1="931.0" x2="1765.6" y2="391.1"/><line x1="1129.6" y1="939.9" x2="1773.1" y2="400.0"/><line x1="1137.0" y1="948.8" x2="1780.5" y2="408.8"/><line x1="1144.5" y1="957.7" x2="1788.0" y2="417.7"/><line x1="1152.0" y1="966.6" x2="1795.4" y2="426.6"/><line x1="1159.4" y1="975.4" x2="1802.9" y2="435.5"/><line x1="1166.9" y1="984.3" x2="1810.3" y2="444.4"/><line x1="1264.4" y1="-130.3" x2="1804.3" y2="513.1"/><line x1="1255.5" y1="-122.9" x2="1795.4" y2="520.6"/><line x1="1246.6" y1="-115.4" x2="1786.6" y2="528.0"/><line x1="1237.7" y1="-108.0" x2="1777.7" y2="535.5"/><line x1="1228.8" y1="-100.5" x2="1768.8" y2="543.0"/><line x1="1220.0" y1="-93.1" x2="1759.9" y2="550.4"/><line x1="1211.1" y1="-85.6" x2="1751.0" y2="557.9"/><line x1="1202.2" y1="-78.1" x2="1742.1" y2="565.3"/><line x1="1193.3" y1="-70.7" x2="1733.2" y2="572.8"/><line x1="1184.4" y1="-63.2" x2="1724.4" y2="580.2"/><line x1="1175.5" y1="-55.8" x2="1715.5" y2="587.7"/><line x1="1166.6" y1="-48.3" x2="1706.6" y2="595.2"/><line x1="1157.8" y1="-40.9" x2="1697.7" y2="602.6"/><line x1="1148.9" y1="-33.4" x2="1688.8" y2="610.1"/><line x1="1140.0" y1="-26.0" x2="1679.9" y2="617.5"/><line x1="1131.1" y1="-18.5" x2="1671.0" y2="625.0"/><line x1="1122.2" y1="-11.0" x2="1662.1" y2="632.4"/><line x1="1113.3" y1="-3.6" x2="1653.3" y2="639.9"/><line x1="1104.4" y1="3.9" x2="1644.4" y2="647.3"/><line x1="1095.5" y1="11.3" x2="1635.5" y2="654.8"/><line x1="1086.7" y1="18.8" x2="1626.6" y2="662.3"/><line x1="1077.8" y1="26.2" x2="1617.7" y2="669.7"/><line x1="1068.9" y1="33.7" x2="1608.8" y2="677.2"/><line x1="1060.0" y1="41.2" x2="1599.9" y2="684.6"/><line x1="1051.1" y1="48.6" x2="1591.1" y2="692.1"/><line x1="1042.2" y1="56.1" x2="1582.2" y2="699.5"/><line x1="1033.3" y1="63.5" x2="1573.3" y2="707.0"/><line x1="1024.5" y1="71.0" x2="1564.4" y2="714.5"/><line x1="1015.6" y1="78.4" x2="1555.5" y2="721.9"/><line x1="1006.7" y1="85.9" x2="1546.6" y2="729.4"/><line x1="997.8" y1="93.3" x2="1537.7" y2="736.8"/><line x1="988.9" y1="100.8" x2="1528.9" y2="744.3"/><line x1="980.0" y1="108.3" x2="1520.0" y2="751.7"/><line x1="971.1" y1="115.7" x2="1511.1" y2="759.2"/><line x1="962.3" y1="123.2" x2="1502.2" y2="766.7"/><line x1="953.4" y1="130.6" x2="1493.3" y2="774.1"/><line x1="944.5" y1="138.1" x2="1484.4" y2="781.6"/><line x1="935.6" y1="145.5" x2="1475.5" y2="789.0"/><line x1="926.7" y1="153.0" x2="1466.7" y2="796.5"/><line x1="917.8" y1="160.5" x2="1457.8" y2="803.9"/><line x1="908.9" y1="167.9" x2="1448.9" y2="811.4"/><line x1="900.1" y1="175.4" x2="1440.0" y2="818.8"/><line x1="891.2" y1="182.8" x2="1431.1" y2="826.3"/><line x1="882.3" y1="190.3" x2="1422.2" y2="833.8"/><line x1="873.4" y1="197.7" x2="1413.3" y2="841.2"/><line x1="864.5" y1="205.2" x2="1404.5" y2="848.7"/><line x1="855.6" y1="212.7" x2="1395.6" y2="856.1"/><line x1="846.7" y1="220.1" x2="1386.7" y2="863.6"/><line x1="837.9" y1="227.6" x2="1377.8" y2="871.0"/><line x1="829.0" y1="235.0" x2="1368.9" y2="878.5"/><line x1="820.1" y1="242.5" x2="1360.0" y2="886.0"/><line x1="811.2" y1="249.9" x2="1351.1" y2="893.4"/><line x1="802.3" y1="257.4" x2="1342.2" y2="900.9"/><line x1="793.4" y1="264.8" x2="1333.4" y2="908.3"/><line x1="784.5" y1="272.3" x2="1324.5" y2="915.8"/><line x1="775.6" y1="279.8" x2="1315.6" y2="923.2"/><line x1="766.8" y1="287.2" x2="1306.7" y2="930.7"/><line x1="757.9" y1="294.7" x2="1297.8" y2="938.1"/><line x1="749.0" y1="302.1" x2="1288.9" y2="945.6"/><line x1="740.1" y1="309.6" x2="1280.0" y2="953.1"/><line x1="731.2" y1="317.0" x2="1271.2" y2="960.5"/><line x1="722.3" y1="324.5" x2="1262.3" y2="968.0"/><line x1="713.4" y1="332.0" x2="1253.4" y2="975.4"/><line x1="704.6" y1="339.4" x2="1244.5" y2="982.9"/><line x1="695.7" y1="346.9" x2="1235.6" y2="990.3"/></g><polygon points="1064.5,547.6 1119.8,526.8 1161.3,561.4 1168.3,596 1147.5,602.9" fill="#e9ebe6" opacity=".75"/></g>
<polyline class="yc" stroke-width="8.6" points="943,-5 941.5,22 936,45 940,65 956,87 994,125 1019,155 1044,182 1054,197 1069,215 1089,240 1101,265 1106,277 1108,283"/>
<polyline class="yc" stroke-width="8.6" points="1054,197 1034,217 1014,230 976,255 944,270 909,292 884,322 849,357 794,420 744,467 708,505 675,560 648,600 622,643 588,690 565,720 525,752 480,781 450,797 425,810"/>
<polyline class="yc" stroke-width="8.6" points="1054,197 1069,185 1099,155 1119,130 1134,100 1146,70 1162,30"/>
<polyline class="yc" stroke-width="8.6" points="1097,-3 1130,9 1162,20 1200,22"/>
<polyline class="yc" stroke-width="8.6" points="1106,277 1131,260 1156,240 1194,217 1219,197 1239,185 1256,181 1275,182 1288,186.6 1300,198 1313.5,215.7 1323,229 1352,258 1381.5,297 1436,348 1455,373 1476.6,402 1486,410"/>
<polyline class="yc" stroke-width="8.6" points="1350,255 1400,320 1448,367 1483,407 1538,475 1588,532 1638,587 1672,632 1693,656 1713,678.5 1728,692 1758,708.5 1788,721 1838,741 1888,758.5 1932,773 2010,800"/>
<polyline class="yc" stroke-width="8.6" points="1483,407 1538,365 1580,330 1595,312 1649,263.5 1661,256.5 1675.5,252.5 1682.5,241.5 1693,228 1705,217 1818,121 1932,25 1962,-2"/>
<polyline class="yc" stroke-width="8.6" points="1330,95 1400,125 1475,157 1513,190 1550,217 1588,230 1638,241"/>
<polyline class="yc" stroke-width="6.6" points="1635.1,238.4 1646,246.2 1649.1,258.6 1647,264"/>
<polyline class="yc" stroke-width="6.6" points="1652,256 1650.6,246.2 1664.6,236.9 1680.1,235.3 1683,241"/>
<polyline class="yc" stroke-width="6.6" points="1635.1,238.4 1664.6,227.5 1695.7,221.3 1703.4,218.2"/>
<polyline class="yc" stroke-width="6.6" points="1046,190 1054,187 1062,192 1063,201 1056,207 1047,204 1045,197 1046,190"/>
<polyline class="yc" stroke-width="6.6" points="1030,219 1048,203"/>
<polyline class="yc" stroke-width="6.6" points="1060,206 1066,216"/>
<polyline class="yc" stroke-width="6.6" points="1062,191 1072,183"/>
<polyline class="yc" stroke-width="6.6" points="1040,180 1047,190"/>
<polyline class="yf" stroke-width="5.2" points="943,-5 941.5,22 936,45 940,65 956,87 994,125 1019,155 1044,182 1054,197 1069,215 1089,240 1101,265 1106,277 1108,283"/>
<polyline class="yf" stroke-width="5.2" points="1054,197 1034,217 1014,230 976,255 944,270 909,292 884,322 849,357 794,420 744,467 708,505 675,560 648,600 622,643 588,690 565,720 525,752 480,781 450,797 425,810"/>
<polyline class="yf" stroke-width="5.2" points="1054,197 1069,185 1099,155 1119,130 1134,100 1146,70 1162,30"/>
<polyline class="yf" stroke-width="5.2" points="1097,-3 1130,9 1162,20 1200,22"/>
<polyline class="yf" stroke-width="5.2" points="1106,277 1131,260 1156,240 1194,217 1219,197 1239,185 1256,181 1275,182 1288,186.6 1300,198 1313.5,215.7 1323,229 1352,258 1381.5,297 1436,348 1455,373 1476.6,402 1486,410"/>
<polyline class="yf" stroke-width="5.2" points="1350,255 1400,320 1448,367 1483,407 1538,475 1588,532 1638,587 1672,632 1693,656 1713,678.5 1728,692 1758,708.5 1788,721 1838,741 1888,758.5 1932,773 2010,800"/>
<polyline class="yf" stroke-width="5.2" points="1483,407 1538,365 1580,330 1595,312 1649,263.5 1661,256.5 1675.5,252.5 1682.5,241.5 1693,228 1705,217 1818,121 1932,25 1962,-2"/>
<polyline class="yf" stroke-width="5.2" points="1330,95 1400,125 1475,157 1513,190 1550,217 1588,230 1638,241"/>
<polyline class="yf" stroke-width="3.4" points="1635.1,238.4 1646,246.2 1649.1,258.6 1647,264"/>
<polyline class="yf" stroke-width="3.4" points="1652,256 1650.6,246.2 1664.6,236.9 1680.1,235.3 1683,241"/>
<polyline class="yf" stroke-width="3.4" points="1635.1,238.4 1664.6,227.5 1695.7,221.3 1703.4,218.2"/>
<polyline class="yf" stroke-width="3.4" points="1046,190 1054,187 1062,192 1063,201 1056,207 1047,204 1045,197 1046,190"/>
<polyline class="yf" stroke-width="3.4" points="1030,219 1048,203"/>
<polyline class="yf" stroke-width="3.4" points="1060,206 1066,216"/>
<polyline class="yf" stroke-width="3.4" points="1062,191 1072,183"/>
<polyline class="yf" stroke-width="3.4" points="1040,180 1047,190"/>
<polyline points="1316,219 1323,229 1352,258 1381.5,297 1436,348 1455,373 1464,385" fill="none" stroke="#e9ebe6" stroke-width="11"/>
<polyline points="1318.6,217.2 1325.4,226.8 1354.4,255.9 1383.8,294.8 1438.3,345.8 1457.6,371.1 1466.6,383.1" fill="none" stroke="#f0bd58" stroke-width="2.600" stroke-linejoin="round"/>
<polyline points="1313.4,220.8 1320.6,231.2 1349.6,260.1 1379.2,299.2 1433.7,350.2 1452.4,374.9 1461.4,386.9" fill="none" stroke="#f0bd58" stroke-width="2.600" stroke-linejoin="round"/>
<text x="743" y="20" font-size="25" fill="#c7305c" textLength="173.5" lengthAdjust="spacingAndGlyphs" stroke="#fff" stroke-width="4" stroke-linejoin="round" paint-order="stroke">&amp; Restaurante</text>
<text x="560" y="70" font-size="25" fill="#2f8c94" textLength="259" lengthAdjust="spacingAndGlyphs" stroke="#fff" stroke-width="4" stroke-linejoin="round" paint-order="stroke">Cerro De La Matanza</text>
<text x="1200" y="15" font-size="25" fill="#4a80da" textLength="282" lengthAdjust="spacingAndGlyphs" stroke="#fff" stroke-width="4" stroke-linejoin="round" paint-order="stroke">Concesionario Oficial...</text>
<text x="1910" y="24" font-size="25" fill="#2f8c94" textLength="118" lengthAdjust="spacingAndGlyphs" stroke="#fff" stroke-width="4" stroke-linejoin="round" paint-order="stroke">Los Lirios</text>
<text x="1493" y="209" font-size="25" fill="#68727e" textLength="186" lengthAdjust="spacingAndGlyphs" stroke="#fff" stroke-width="4" stroke-linejoin="round" paint-order="stroke">Daser Agro S.A</text>
<text x="1433" y="329" font-size="25" fill="#3a8a4c" textLength="224.5" lengthAdjust="spacingAndGlyphs" stroke="#fff" stroke-width="4" stroke-linejoin="round" paint-order="stroke">Complejo El Ceibo</text>
<text x="1039" y="261" font-size="25" fill="#5f70c6" textLength="47" lengthAdjust="spacingAndGlyphs" stroke="#fff" stroke-width="4" stroke-linejoin="round" paint-order="stroke">YPF</text>
<text x="1632.5" y="519" font-size="25" fill="#68727e" text-anchor="end" textLength="169.5" lengthAdjust="spacingAndGlyphs" stroke="#fff" stroke-width="4" stroke-linejoin="round" paint-order="stroke">Agroservicios</text>
<text x="1633" y="546" font-size="25" fill="#68727e" text-anchor="end" textLength="190" lengthAdjust="spacingAndGlyphs" stroke="#fff" stroke-width="4" stroke-linejoin="round" paint-order="stroke">Pampeanos SA</text>
<text x="1334" y="748.5" font-size="25" fill="#6f757b" textLength="209" lengthAdjust="spacingAndGlyphs" stroke="#fff" stroke-width="4" stroke-linejoin="round" paint-order="stroke">Victoria del Agua</text>
<text x="1359" y="771" font-size="21" fill="#858b90" textLength="184.5" lengthAdjust="spacingAndGlyphs" stroke="#fff" stroke-width="4" stroke-linejoin="round" paint-order="stroke">Temporarily closed</text>
<text x="1350" y="108" font-size="20" fill="#7d6244" textLength="131" lengthAdjust="spacingAndGlyphs" transform="rotate(23.2 1350 108)" stroke="#fff" stroke-width="3.5" stroke-linejoin="round" paint-order="stroke">Conexion Vial</text>
<text x="891.5" y="612.5" font-size="22" fill="#3f6ec6" textLength="147.5" lengthAdjust="spacingAndGlyphs" transform="rotate(-16.3 891.5 612.5)">Riacho Victoria</text>
<g font-size="20.0" fill="#3a66b8"><text x="326.6" y="506.5" transform="rotate(-13.3 326.6 506.5)">R</text><text x="340.7" y="503.2" transform="rotate(-13.3 340.7 503.2)">&#237;</text><text x="346.1" y="501.9" transform="rotate(-13.3 346.1 501.9)">o</text><text x="362.4" y="498.1" transform="rotate(-13.3 362.4 498.1)">E</text><text x="375.4" y="495.0" transform="rotate(-13.3 375.4 495.0)">l</text><text x="385.1" y="492.7" transform="rotate(-13.3 385.1 492.7)">E</text><text x="398.1" y="489.6" transform="rotate(16.2 398.1 489.6)">s</text><text x="407.8" y="489.9" transform="rotate(16.2 407.8 489.9)">p</text><text x="418.5" y="493.0" transform="rotate(16.2 418.5 493.0)">i</text><text x="422.8" y="494.3" transform="rotate(16.2 422.8 494.3)">n</text><text x="433.5" y="497.4" transform="rotate(16.2 433.5 497.4)">i</text><text x="437.8" y="498.6" transform="rotate(16.2 437.8 498.6)">l</text><text x="442.1" y="499.9" transform="rotate(16.2 442.1 499.9)">l</text><text x="446.3" y="501.1" transform="rotate(16.2 446.3 501.1)">o</text></g>
<path d="M982 231 h30 q5 0 5 5 v18 l-3 4 l-17 4 l-17 -4 l-3 -4 v-18 q0 -5 5 -5z" fill="#fff" stroke="#4a4a4a" stroke-width="2"/><text x="997" y="253" font-size="19.5" fill="#222" text-anchor="middle" textLength="29" lengthAdjust="spacingAndGlyphs" stroke="#222" stroke-width="0.5" stroke-linejoin="round" paint-order="stroke">174</text>
<path d="M713 469 h30 q5 0 5 5 v18 l-3 4 l-17 4 l-17 -4 l-3 -4 v-18 q0 -5 5 -5z" fill="#fff" stroke="#4a4a4a" stroke-width="2"/><text x="728" y="491" font-size="19.5" fill="#222" text-anchor="middle" textLength="29" lengthAdjust="spacingAndGlyphs" stroke="#222" stroke-width="0.5" stroke-linejoin="round" paint-order="stroke">174</text>
<path d="M441 781 h30 q5 0 5 5 v18 l-3 4 l-17 4 l-17 -4 l-3 -4 v-18 q0 -5 5 -5z" fill="#fff" stroke="#4a4a4a" stroke-width="2"/><text x="456" y="803" font-size="19.5" fill="#222" text-anchor="middle" textLength="29" lengthAdjust="spacingAndGlyphs" stroke="#222" stroke-width="0.5" stroke-linejoin="round" paint-order="stroke">174</text>
<rect x="1509" y="449" width="33" height="22" fill="#6a994a"/><text x="1525.5" y="467.5" font-size="19" fill="#fff" text-anchor="middle" font-weight="bold">11</text>
<rect x="1725.5" y="693" width="33" height="22" fill="#6a994a"/><text x="1742" y="711.5" font-size="19" fill="#fff" text-anchor="middle" font-weight="bold">11</text>
<rect x="1158.5" y="216" width="33" height="22" fill="#6a994a"/><text x="1175" y="234.5" font-size="19" fill="#fff" text-anchor="middle" font-weight="bold">11</text>
<path d="M925.841 -3.61057 A20 20 0 1 1 961.159 -3.61057 Q949.5 11.42 943.5 24 Q937.5 11.42 925.841 -3.61057 Z" fill="#e64a7b"/>
<path d="M1157.34 -8.61057 A20 20 0 1 1 1192.66 -8.61057 Q1181 6.42 1175 19 Q1169 6.42 1157.34 -8.61057 Z" fill="#4a86e8"/>
<path d="M2036.84 -1.61057 A20 20 0 1 1 2072.16 -1.61057 Q2060.5 13.42 2054.5 26 Q2048.5 13.42 2036.84 -1.61057 Z" fill="#3fa9be"/>
<path d="M828.341 61.3894 A20 20 0 1 1 863.659 61.3894 Q852 76.42 846 89 Q840 76.42 828.341 61.3894 Z" fill="#3fa9be"/><g transform="translate(846 52)" fill="#fff"><path d="M-8 -11h4v4h2.5v-4h3v4H4v-4h4v8l-2.5 2.5v6.5l2.5 3v2H-8v-2l2.5-3v-6.5L-8 -3z"/></g>
<path d="M970.841 86.3894 A20 20 0 1 1 1006.16 86.3894 Q994.5 101.42 988.5 114 Q982.5 101.42 970.841 86.3894 Z" fill="#78909c"/><g transform="translate(988.5 77)" fill="#fff"><path d="M-12 9v-13q0-4 3-4t3 4v13zM-5 9v-19q0-5 5-5t5 5v19h-3v-6h-4v6zM6 9v-13q0-4 3-4t3 4v13z"/></g>
<path d="M1687.84 200.389 A20 20 0 1 1 1723.16 200.389 Q1711.5 214.76 1705.5 227 Q1699.5 214.76 1687.84 200.389 Z" fill="#78909c"/><g transform="translate(1705.5 191)" fill="#fff"><circle r="6.5"/></g>
<path d="M1666.34 320.389 A20 20 0 1 1 1701.66 320.389 Q1690 335.09 1684 347.5 Q1678 335.09 1666.34 320.389 Z" fill="#4caf60"/><g transform="translate(1684 311)" fill="#fff"><path d="M0 -10L11 9H-11zM0 -3L-5 6H5z" fill-rule="evenodd"/></g>
<path d="M1640.84 523.389 A20 20 0 1 1 1676.16 523.389 Q1664.5 538.42 1658.5 551 Q1652.5 538.42 1640.84 523.389 Z" fill="#78909c"/><g transform="translate(1658.5 514)" fill="#fff"><circle r="6.5"/></g>
<path d="M1552.84 749.389 A20 20 0 1 1 1588.16 749.389 Q1576.5 764.42 1570.5 777 Q1564.5 764.42 1552.84 749.389 Z" fill="#8d9499"/><g transform="translate(1570.5 740)" fill="#fff"><circle r="7.500" cy="-3" fill="none" stroke="#fff" stroke-width="1.300"/><g><circle cx="7.5" cy="-3.0" r="1.900"/><circle cx="5.3" cy="2.3" r="1.900"/><circle cx="0.0" cy="4.5" r="1.900"/><circle cx="-5.3" cy="2.3" r="1.900"/><circle cx="-7.5" cy="-3.0" r="1.900"/><circle cx="-5.3" cy="-8.3" r="1.900"/><circle cx="-0.0" cy="-10.5" r="1.900"/><circle cx="5.3" cy="-8.3" r="1.900"/></g><path d="M-1.500 -4h3l2.500 15h-8z"/></g>
<text x="1143" y="429" font-size="26" fill="#3a3a3a" textLength="93.5" lengthAdjust="spacingAndGlyphs" stroke="#f4f4f0" stroke-width="4" stroke-linejoin="round" paint-order="stroke">Victoria</text>
<text x="1352.5" y="427.5" font-size="25" fill="#2f8c94" textLength="189.5" lengthAdjust="spacingAndGlyphs" stroke="#fff" stroke-width="4" stroke-linejoin="round" paint-order="stroke">Museo del Ovni</text>
<text x="1176.5" y="500" font-size="20" fill="#7a7a78" textLength="69" lengthAdjust="spacingAndGlyphs" transform="rotate(-40.6 1176.5 500)" stroke="#f4f4f0" stroke-width="3" stroke-linejoin="round" paint-order="stroke">Piaggio</text>
<text x="1243.5" y="439.6" font-size="20" fill="#7a7a78" textLength="89" lengthAdjust="spacingAndGlyphs" transform="rotate(49 1243.5 439.6)" stroke="#f4f4f0" stroke-width="3" stroke-linejoin="round" paint-order="stroke">9 de Julio</text>
<text x="1368" y="517" font-size="20" fill="#7a7a78" textLength="102" lengthAdjust="spacingAndGlyphs" transform="rotate(-40.8 1368 517)" stroke="#f4f4f0" stroke-width="3" stroke-linejoin="round" paint-order="stroke">Blvd. Brown</text>
<polygon points="1030,338 1059,319 1082,348 1053,368" fill="#e0e2dd"/><path d="M1078 378 l8 -6 l4 5 l6 -11 l2 10 l-6 6 l4 6 l-8 6 l-6 -8 z" fill="#bcc4a6"/>
<polygon points="1246,187 1400.5,272 1472.5,420.5 1258,677 1064,545 1018,336" fill="rgba(250,40,30,0.36)" stroke="rgba(230,40,34,0.92)" stroke-width="2.700" stroke-linejoin="round"/>
<path d="M1094.34 250.389 A20 20 0 1 1 1129.66 250.389 Q1118 266.74 1112 280 Q1106 266.74 1094.34 250.389 Z" fill="#6878c8"/><g transform="translate(1112 241)" fill="#fff"><path d="M-9 11v-3h2v-16q0-3 3-3h6q3 0 3 3v16h2v3zM-4 -7v6h6v-6zM7 -8l4 3v10q0 2-2 2t-2-2v-5h-2v-2h4v7h0v-9l-3-2z"/></g>
<path d="M1308.34 418.889 A20 20 0 1 1 1343.66 418.889 Q1332 433.59 1326 446 Q1320 433.59 1308.34 418.889 Z" fill="#7c8fa6"/><g transform="translate(1326 409.5)" fill="#fff"><path d="M0 -12L12 -4v2H-12v-2zM-10 0h20v10h-20zM-13 11h26v2.500h-26z"/><path d="M-6 2v6h2v-3.500l2 2.500 2-2.500V8h2V2h-2l-2 3-2-3z" fill="#7c8fa6" transform="translate(2 0)"/></g>
<text x="845" y="470" font-size="25" fill="#c82c58" textLength="214" lengthAdjust="spacingAndGlyphs" stroke="rgba(255,255,255,0.85)" stroke-width="4" stroke-linejoin="round" paint-order="stroke">Hotel Sol Victoria</text>
<text x="1033" y="621" font-size="25" fill="#c82c58" textLength="217" lengthAdjust="spacingAndGlyphs" stroke="rgba(255,255,255,0.75)" stroke-width="4" stroke-linejoin="round" paint-order="stroke">Hotel Casablanca</text>
<path d="M1069.34 459.389 A20 20 0 1 1 1104.66 459.389 Q1093 474.75 1087 487.5 Q1081 474.75 1069.34 459.389 Z" fill="#e8506c"/><g transform="translate(1087 450)" fill="#fff"><path d="M-11 -7h2.500v8H11v6h-2.500v-3h-17v3H-11zM-7 -4h4v4h-4zM-1 -3h9q3 0 3 3h-12z"/></g>
<path d="M1258.84 610.389 A20 20 0 1 1 1294.16 610.389 Q1282.5 626.74 1276.5 640 Q1270.5 626.74 1258.84 610.389 Z" fill="#e8506c"/><g transform="translate(1276.5 601)" fill="#fff"><path d="M-11 -7h2.500v8H11v6h-2.500v-3h-17v3H-11zM-7 -4h4v4h-4zM-1 -3h9q3 0 3 3h-12z"/></g>
<circle cx="1323.25" cy="229.5" r="7.500" fill="rgba(255,255,255,0.45)" stroke="rgba(235,60,50,0.5)" stroke-width="2"/>
<circle cx="1436.5" cy="346.25" r="7.500" fill="rgba(255,255,255,0.45)" stroke="rgba(235,60,50,0.5)" stroke-width="2"/>
<circle cx="1365.25" cy="548.75" r="7.500" fill="rgba(255,255,255,0.45)" stroke="rgba(235,60,50,0.5)" stroke-width="2"/>
<circle cx="1161" cy="611" r="7.500" fill="rgba(255,255,255,0.45)" stroke="rgba(235,60,50,0.5)" stroke-width="2"/>
<circle cx="1041" cy="440.5" r="7.500" fill="rgba(255,255,255,0.45)" stroke="rgba(235,60,50,0.5)" stroke-width="2"/>
<circle cx="1132" cy="261.5" r="7.500" fill="rgba(255,255,255,0.45)" stroke="rgba(235,60,50,0.5)" stroke-width="2"/>
<circle cx="1246" cy="187" r="8" fill="#fff" stroke="#e23a32" stroke-width="2.400"/>
<circle cx="1400.5" cy="272" r="8" fill="#fff" stroke="#e23a32" stroke-width="2.400"/>
<circle cx="1472.5" cy="420.5" r="8" fill="#fff" stroke="#e23a32" stroke-width="2.400"/>
<circle cx="1258" cy="677" r="8" fill="#fff" stroke="#e23a32" stroke-width="2.400"/>
<circle cx="1064" cy="545" r="8" fill="#fff" stroke="#e23a32" stroke-width="2.400"/>
<circle cx="1018" cy="336" r="8" fill="#fff" stroke="#e23a32" stroke-width="2.400"/>
<path d="M1264.8 400 C1262.8 386 1255.8 378 1247.8 369.5 C1242.8 363.5 1239.8 357.5 1239.8 351.5 A25 25 0 0 1 1289.8 351.5 C1289.8 357.5 1286.8 363.5 1281.8 369.5 C1273.8 378 1266.8 386 1264.8 400 Z" fill="#df4f44" stroke="#c23a33" stroke-width="2"/>
<circle cx="1264.8" cy="351.5" r="9.500" fill="#ae2a23"/>
<g transform="translate(1103 523) scale(0.04608)"><path d="M675 450 Q700 385 760 410 Q800 430 810 520 L835 640 Q850 590 900 600 Q935 605 940 650 Q950 590 1000 595 Q1040 600 1045 655 Q1070 610 1110 625 Q1180 650 1180 720 L1150 900 Q1130 1000 1090 1060 L1040 1090 L960 1030 L900 1080 L790 1060 Q700 950 560 720 Q540 660 600 660 Q640 660 720 740 Z" fill="#fff" stroke="#2a1a18" stroke-width="52" stroke-linejoin="round"/><path d="M860 790V940M950 790V940M1040 790V940" stroke="#555" stroke-width="36" fill="none"/></g>
</svg>
<div class="abs" style="left:20px;top:20px;width:336px;height:80px;background:#fff;border-radius:4px;box-shadow:0 2px 6px rgba(0,0,0,.2);"></div>
<div class="abs" style="left:158px;top:20px;width:2px;height:80px;background:#e6e6e6"></div>
<div class="abs" style="left:20px;top:20px;width:138px;height:80px;line-height:80px;text-align:center;font-size:36px;font-weight:bold;color:#000;letter-spacing:-.5px">Map</div>
<div class="abs" style="left:160px;top:20px;width:196px;height:80px;line-height:80px;text-align:center;font-size:36px;color:#565656;letter-spacing:.3px">Satellite</div>
<div class="abs" style="left:1008px;top:20.500px;width:401px;height:80px;background:#fff;border-right:1.500px solid #a3adba;border-bottom:2px solid #8f9bab;box-shadow:0 1px 3px rgba(0,0,0,.2)"></div>
<svg class="abs" style="left:1096px;top:44px" width="26" height="30" viewBox="0 0 26 30"><path d="M8.500 2h9l1.500 2.500H24V8H2V4.500h5zM4 10h18l-1.200 17q-.2 2-2.300 2H7.500q-2.100 0-2.300-2z" fill="#73879c"/><path d="M9.200 13v12M13 13v12M16.800 13v12" stroke="#fff" stroke-width="1.600"/></svg>
<div class="abs" style="left:1131px;top:40px;height:40px;line-height:40px;font-size:26px;color:#73879c;white-space:nowrap;-webkit-text-stroke:.35px #73879c">Eliminar Pol&iacute;gono</div>
<div class="abs" style="left:2430px;top:20px;width:80px;height:80px;background:#fff;border-radius:4px;box-shadow:0 2px 6px rgba(0,0,0,.2);"></div>
<svg class="abs" style="left:2452px;top:42px" width="36" height="36" viewBox="0 0 36 36"><path d="M0 12V0h12v6H6v6zM24 0h12v12h-6V6h-6zM36 24v12H24v-6h6v-6zM12 36H0V24h6v6h6z" fill="#666"/></svg>
<div class="abs" style="left:2430px;top:446px;width:80px;height:80px;background:#fff;border-radius:4px;box-shadow:0 2px 6px rgba(0,0,0,.2);"></div>
<svg class="abs" style="left:2449.5px;top:455.5px" width="41" height="63" viewBox="0 0 44 68"><path d="M14 24h16q4 0 5.500 4l4 16q.5 2.500-1.500 3t-3-2l-3-9v0l-1 26q0 2-3 2h-2.500l-1.500-20h-2l-1.500 20H18q-3 0-3-2l-1-26l-3 9q-1 2.500-3 2t-1.500-3l4-16q1.500-4 5.500-4z" fill="#f5b731" stroke="#c8902a" stroke-width="1.500"/><path d="M15 24h14l-7 10z" fill="#d9762b"/><circle cx="22" cy="13" r="11" fill="#f5b731" stroke="#c8902a" stroke-width="1.500"/></svg>
<div class="abs" style="left:2430px;top:590px;width:80px;height:162px;background:#fff;border-radius:4px;box-shadow:0 2px 6px rgba(0,0,0,.2);"></div>
<div class="abs" style="left:2441px;top:670px;width:58px;height:2px;background:#e6e6e6"></div>
<svg class="abs" style="left:2452px;top:612px" width="36" height="36" viewBox="0 0 36 36"><path d="M14.500 0h7v14.500H36v7H21.500V36h-7V21.500H0v-7h14.500z" fill="#666"/></svg>
<div class="abs" style="left:2452px;top:708px;width:36px;height:8px;background:#666"></div>
<div class="abs" style="left:1828px;top:772px;width:702px;height:28px;background:rgba(245,247,245,.72)"></div>
<svg class="abs" style="left:1840px;top:772px" width="174" height="28"><text x="0" y="23" font-size="20" fill="#000" font-family="Liberation Sans, sans-serif" textLength="172" lengthAdjust="spacingAndGlyphs">Keyboard shortcuts</text></svg>
<svg class="abs" style="left:2035px;top:772px" width="151" height="28"><text x="0" y="23" font-size="20" fill="#000" font-family="Liberation Sans, sans-serif" textLength="149" lengthAdjust="spacingAndGlyphs">Map data &copy;2022</text></svg>
<svg class="abs" style="left:2209px;top:772px" width="119.5" height="28"><text x="0" y="23" font-size="20" fill="#000" font-family="Liberation Sans, sans-serif" textLength="117.5" lengthAdjust="spacingAndGlyphs">Terms of Use</text></svg>
<svg class="abs" style="left:2352px;top:772px" width="167" height="28"><text x="0" y="23" font-size="20" fill="#000" font-family="Liberation Sans, sans-serif" textLength="165" lengthAdjust="spacingAndGlyphs">Report a map error</text></svg>
<div class="abs" style="left:2023px;top:772px;width:1px;height:28px;background:rgba(215,225,218,.9)"></div>
<div class="abs" style="left:2197px;top:772px;width:1px;height:28px;background:rgba(215,225,218,.9)"></div>
<div class="abs" style="left:2339.5px;top:772px;width:1px;height:28px;background:rgba(215,225,218,.9)"></div>
<svg class="abs" style="left:14px;top:750.500px" width="130" height="52" viewBox="0 0 130 52" font-family="Liberation Sans, sans-serif"><g font-size="37" stroke="#fff" stroke-width="5" stroke-linejoin="round" paint-order="stroke" letter-spacing="-1.500"><text x="6" y="33"><tspan fill="#4285f4">G</tspan><tspan fill="#ea4335">o</tspan><tspan fill="#fbbc05">o</tspan><tspan fill="#4285f4">g</tspan><tspan fill="#34a853">l</tspan><tspan fill="#ea4335">e</tspan></text></g><g font-size="37" letter-spacing="-1.500"><text x="6" y="33"><tspan fill="#4285f4">G</tspan><tspan fill="#ea4335">o</tspan><tspan fill="#fbbc05">o</tspan><tspan fill="#4285f4">g</tspan><tspan fill="#34a853">l</tspan><tspan fill="#ea4335">e</tspan></text></g></svg>
</div>
<div class="abs botgrad"></div>
<div class="abs hr2"></div>
<div class="abs btn" style="left:719px;top:1289px;width:163px;background:#4478b2;border:2px solid #38679f">Cancelar</div>
<div class="abs btn" style="left:901px;top:1289px;width:174px;background:#56b39a;border:2px solid #4aa58c">Actualizar</div>
<div class="abs botbar"></div>
</body></html>
